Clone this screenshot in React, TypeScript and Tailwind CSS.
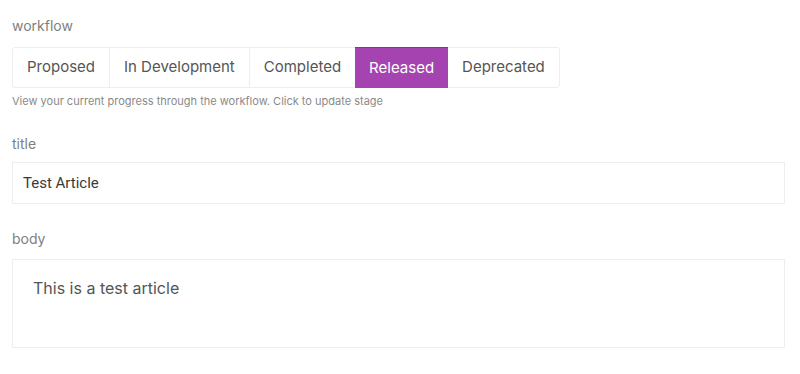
const STAGES = ["Proposed", "In Development", "Completed", "Released", "Deprecated"];

export default function App() {
  const current = "Released";
  return (
    <div className="min-h-screen bg-white pl-3 pr-[15px] pt-[17px] font-['Inter',sans-serif]">
      <div className="text-[14px] leading-[18px] text-[#808080]">workflow</div>
      <div className="mt-[12px] flex w-fit rounded-[3px] border border-[#eeeeee]">
        {STAGES.map((s, i) => (
          <button
            key={s}
            className={`h-[39px] px-[14px] text-[15px] ${
              s === current
                ? "-my-px h-[41px] border-t border-t-[#8e2d99] bg-[#a544b0] text-white"
                : "text-[#555555]"
            } ${i > 0 && s !== current && STAGES[i - 1] !== current ? "border-l border-[#eeeeee]" : ""}`}
          >
            {s}
          </button>
        ))}
      </div>
      <p className="mt-[6px] text-[11px] leading-[14px] text-[#8a8a8a]">
        View your current progress through the workflow. Click to update stage
      </p>

      <div className="mt-[27px] text-[14px] leading-[18px] text-[#808080]">title</div>
      <div className="mt-[9px] flex h-[42px] items-center border border-[#eeeeee] px-[10px] font-['Roboto',sans-serif] text-[15px] text-[#3a3a3a]">
        Test Article
      </div>

      <div className="mt-[26px] text-[14px] leading-[18px] text-[#808080]">body</div>
      <div className="mt-[11px] h-[89px] border border-[#eeeeee] px-[20px] pt-[18px] text-[16px] leading-[20px] text-[#555555]">
        This is a test article
      </div>
    </div>
  );
}
